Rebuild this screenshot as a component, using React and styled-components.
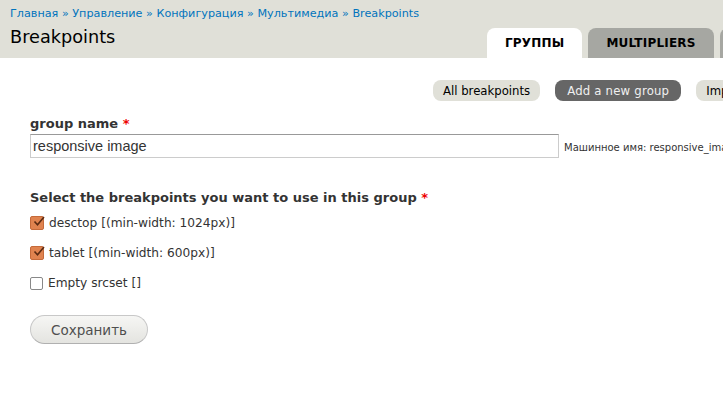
import styled, { createGlobalStyle } from "styled-components"

const GlobalStyle = createGlobalStyle`
    body {
        margin: 0;
        background: #fff;
        font-family: "DejaVu Sans", "Liberation Sans", sans-serif;
        color: #333;
        overflow: hidden;
    }
`

const crumbs = ["Главная", "Управление", "Конфигурация", "Мультимедиа", "Breakpoints"]

const breakpoints = [
    { label: "desctop [(min-width: 1024px)]", checked: true },
    { label: "tablet [(min-width: 600px)]", checked: true },
    { label: "Empty srcset []", checked: false },
]

function Check({ checked }) {
    if (!checked) return <EmptyBox />
    return (
        <CheckBox>
            <svg width="13" height="13" viewBox="0 0 13 13">
                <path d="M2.5 6.5 L5.5 9.8 L12 2" fill="none" stroke="#5a2a12" strokeWidth="1.6" />
            </svg>
        </CheckBox>
    )
}

export default function App() {
    return (
        <Page>
            <GlobalStyle />
            <Header>
                <Breadcrumb>
                    {crumbs.map((c, i) => (
                        <span key={c}>
                            <a>{c}</a>
                            {i < crumbs.length - 1 && <Sep> » </Sep>}
                        </span>
                    ))}
                </Breadcrumb>
                <TitleRow>
                    <Title>Breakpoints</Title>
                    <Tabs>
                        <Tab $active>ГРУППЫ</Tab>
                        <Tab>MULTIPLIERS</Tab>
                        <Tab>IMPORT</Tab>
                    </Tabs>
                </TitleRow>
            </Header>
            <Content>
                <Actions>
                    <Pill>All breakpoints</Pill>
                    <Pill $dark>Add a new group</Pill>
                    <Pill>Import group</Pill>
                </Actions>
                <Label $top={15}>
                    group name <Req>*</Req>
                </Label>
                <FieldRow>
                    <TextInput defaultValue="responsive image" />
                    <Machine>Машинное имя: responsive_image</Machine>
                </FieldRow>
                <Label $top={32}>
                    Select the breakpoints you want to use in this group <Req>*</Req>
                </Label>
                <Checks>
                    {breakpoints.map((b) => (
                        <CheckRow key={b.label}>
                            <Check checked={b.checked} />
                            {b.label}
                        </CheckRow>
                    ))}
                </Checks>
                <SaveButton>Сохранить</SaveButton>
            </Content>
        </Page>
    )
}

const Page = styled.div`
    width: 723px;
    height: 409px;
    overflow: hidden;
`

const Header = styled.div`
    background: #e0e0d8;
    height: 58px;
    padding: 0 0 0 10px;
    box-sizing: border-box;
    overflow: hidden;
`

const Breadcrumb = styled.div`
    padding-top: 7px;
    font-size: 11.2px;
    line-height: 14px;
    white-space: nowrap;
    a {
        color: #0074bd;
    }
`

const Sep = styled.span`
    color: #0074bd;
`

const TitleRow = styled.div`
    display: grid;
    grid-template-columns: 477px auto;
    align-items: end;
    height: 37px;
`

const Title = styled.h1`
    margin: 0;
    align-self: start;
    padding-top: 6px;
    font-size: 17.7px;
    font-weight: normal;
    color: #000;
`

const Tabs = styled.div`
    display: flex;
    gap: 6px;
    white-space: nowrap;
`

const Tab = styled.div`
    height: 30px;
    padding: 0 18px;
    display: flex;
    align-items: center;
    justify-content: center;
    border-radius: 8px 8px 0 0;
    background: ${(p) => (p.$active ? "#fff" : "#a6a7a2")};
    font-size: 12px;
    font-weight: bold;
    color: #000;
    letter-spacing: 0.2px;
    box-sizing: border-box;
    flex-shrink: 0;
`

const Content = styled.div`
    padding: 22px 0 0 30px;
    white-space: nowrap;
`

const Actions = styled.div`
    display: flex;
    gap: 15px;
    margin-left: 403px;
`

const Pill = styled.div`
    height: 21px;
    padding: 0 ${(p) => (p.$dark ? "12px" : "10px")};
    border-radius: 8px;
    display: flex;
    align-items: center;
    flex-shrink: 0;
    font-size: 11.7px;
    letter-spacing: ${(p) => (p.$dark ? "0.2px" : "0")};
    background: ${(p) => (p.$dark ? "#666" : "#e0e0d8")};
    color: ${(p) => (p.$dark ? "#f0f0f0" : "#000")};
`

const Label = styled.div`
    margin-top: ${(p) => p.$top ?? 6}px;
    font-size: 13px;
    font-weight: bold;
    color: #333;
    line-height: 16px;
`

const Req = styled.span`
    color: #e00;
`

const FieldRow = styled.div`
    display: flex;
    align-items: center;
    gap: 5px;
    margin-top: 2px;
`

const TextInput = styled.input`
    width: 529px;
    height: 24px;
    flex-shrink: 0;
    box-sizing: border-box;
    border: 1px solid #ccc;
    border-top-color: #999;
    padding: 0 2px;
    font-family: "Liberation Sans", Arial, sans-serif;
    font-size: 14.5px;
    color: #333;
    outline: none;
`

const Machine = styled.span`
    font-size: 10px;
    color: #333;
    padding-top: 2px;
`

const Checks = styled.div`
    display: flex;
    flex-direction: column;
    gap: 12px;
    margin-top: 8px;
`

const CheckRow = styled.label`
    display: flex;
    align-items: center;
    gap: 5px;
    font-size: 12.2px;
    color: #333;
    height: 18px;
`

const CheckBox = styled.span`
    width: 12px;
    height: 12px;
    border-radius: 2px;
    background: #e0834f;
    border: 1px solid #c56a3a;
    display: flex;
    align-items: center;
    justify-content: center;
    svg {
        margin-top: -3px;
        margin-right: -3px;
    }
`

const EmptyBox = styled.span`
    width: 11px;
    height: 11px;
    border: 1px solid #888;
    border-radius: 2px;
    background: #fff;
`

const SaveButton = styled.button`
    margin-top: 23px;
    width: 118px;
    height: 29px;
    border-radius: 15px;
    border: 1px solid #c8c8c8;
    border-bottom-color: #b0b0b0;
    background: linear-gradient(#f6f6f4, #e4e4e0);
    font-family: "DejaVu Sans", sans-serif;
    font-size: 13.5px;
    color: #4f4f4f;
`
